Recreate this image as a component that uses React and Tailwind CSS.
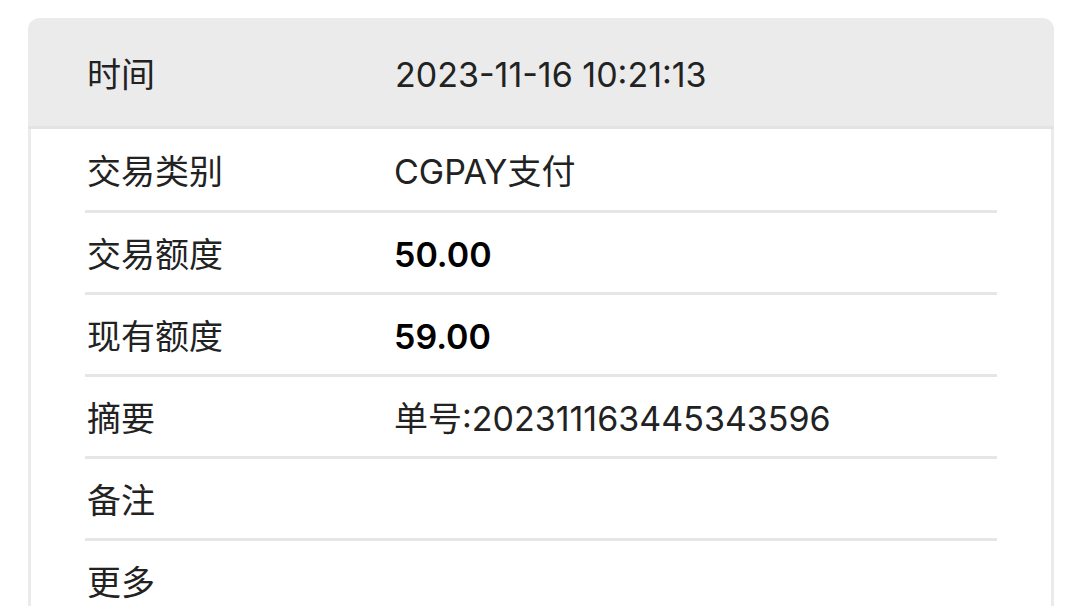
const rows = [
  { label: '交易类别', value: 'CGPAY支付' },
  { label: '交易额度', value: '50.00', bold: true },
  { label: '现有额度', value: '59.00', bold: true },
  { label: '摘要', value: '单号:202311163445343596' },
  { label: '备注', value: '' },
  { label: '更多', value: '' },
]

const font = { fontFamily: 'Inter, "Noto Sans CJK SC", sans-serif' }

export default function App() {
  return (
    <div className="h-[606px] overflow-hidden bg-white pl-[28px] pr-[26px] pt-[18px]" style={font}>
      <div className="rounded-t-[12px] border-x-[3px] border-[#ebebeb] bg-white">
        {/* Header */}
        <div className="-mx-[3px] flex h-[111px] items-center rounded-t-[12px] border-b-[3px] border-[#e3e3e3] bg-[#ebebeb] pl-[59px] pt-[4px] text-[34px] text-[#222]">
          <span className="w-[308px]">时间</span>
          <span>2023-11-16 10:21:13</span>
        </div>

        {/* Rows */}
        <div className="px-[54px]">
          {rows.map((row, i) => (
            <div
              key={row.label}
              className={`flex items-center border-b-[3px] border-[#e6e6e6] pt-[3px] text-[34px] text-[#222] ${
                i === 0 ? 'h-[84px]' : 'h-[82px]'
              }`}
            >
              <span className="w-[309px] pl-[2px]">{row.label}</span>
              <span className={row.bold ? 'font-semibold text-black' : ''}>{row.value}</span>
            </div>
          ))}
        </div>
      </div>
    </div>
  )
}
